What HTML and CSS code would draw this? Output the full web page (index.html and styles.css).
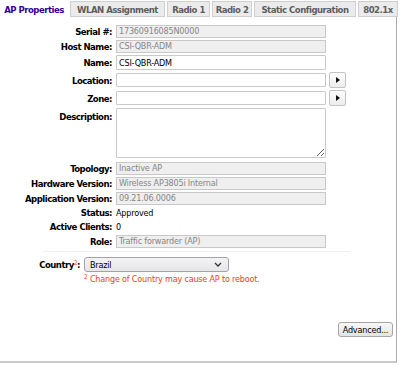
FILE: index.html
```html
<!DOCTYPE html>
<html>
<head>
<meta charset="utf-8">
<link rel="stylesheet" href="styles.css">
</head>
<body>
<div class="tabs">
  <div class="tab active t-ap">AP Properties</div>
  <div class="tab t-wlan">WLAN Assignment</div>
  <div class="tab t-r1">Radio 1</div>
  <div class="tab t-r2">Radio 2</div>
  <div class="tab t-static">Static Configuration</div>
  <div class="tab t-dot">802.1x</div>
</div>
<div class="panel">
  <div class="form">
    <label class="lbl">Serial #:</label>
    <div class="ro">17360916085N0000</div>
    <span></span>

    <label class="lbl">Host Name:</label>
    <div class="ro">CSI-QBR-ADM</div>
    <span></span>

    <label class="lbl">Name:</label>
    <input class="inp inp-name" type="text" value="CSI-QBR-ADM">
    <span></span>

    <label class="lbl">Location:</label>
    <input class="inp" type="text" value="">
    <button class="arrow" type="button"><svg width="4" height="6" viewBox="0 0 4 6"><path d="M0 0L4 3L0 6Z" fill="#111"/></svg></button>

    <label class="lbl">Zone:</label>
    <input class="inp" type="text" value="">
    <button class="arrow" type="button"><svg width="4" height="6" viewBox="0 0 4 6"><path d="M0 0L4 3L0 6Z" fill="#111"/></svg></button>

    <label class="lbl lbl-top">Description:</label>
    <textarea class="desc"></textarea>
    <span></span>

    <label class="lbl lbl-topo">Topology:</label>
    <div class="ro ro-topo">Inactive AP</div>
    <span></span>

    <label class="lbl">Hardware Version:</label>
    <div class="ro">Wireless AP3805i Internal</div>
    <span></span>

    <label class="lbl">Application Version:</label>
    <div class="ro">09.21.06.0006</div>
    <span></span>

    <label class="lbl line">Status:</label>
    <div class="val line">Approved</div>
    <span></span>

    <label class="lbl line">Active Clients:</label>
    <div class="val line">0</div>
    <span></span>

    <label class="lbl">Role:</label>
    <div class="ro">Traffic forwarder (AP)</div>
    <span></span>
  </div>

  <div class="sep"></div>

  <div class="country">
    <label class="lbl clbl">Country<sup class="sup">2</sup>:</label>
    <div class="select">
      <span>Brazil</span>
      <svg width="8" height="5" viewBox="0 0 8 5"><path d="M1 1L4 4L7 1" fill="none" stroke="#333" stroke-width="1.3"/></svg>
    </div>
  </div>
  <div class="note"><sup class="nsup">2</sup> Change of Country may cause AP to reboot.</div>

  <div class="actions">
    <button class="adv" type="button">Advanced...</button>
  </div>
</div>
</body>
</html>
```
FILE: styles.css
```css
* { box-sizing: border-box; }

body {
  margin: 0;
  background: #fff;
  font-family: "DejaVu Sans Condensed", "DejaVu Sans", sans-serif;
  font-stretch: condensed;
  font-size: 9px;
  letter-spacing: -0.2px;
  color: #000;
}

.tabs {
  display: flex;
  align-items: flex-end;
  height: 17px;
}

.tab {
  height: 16px;
  border: 1px solid #cfcfcf;
  background: #ebebeb;
  color: #5e5e5e;
  font-weight: bold;
  font-size: 9.5px;
  letter-spacing: -0.5px;
  display: flex;
  align-items: center;
  justify-content: center;
  margin-right: 2px;
  white-space: nowrap;
}

.tab.active {
  background: #fff;
  border-color: #fff;
  color: #330099;
}

.t-ap { width: 68px; }
.t-wlan { width: 95px; }
.t-r1 { width: 43px; }
.t-r2 { width: 40px; }
.t-static { width: 102px; }
.t-dot { width: 40px; margin-right: 0; }

.panel {
  width: 397px;
  height: 346px;
  border-right: 1px solid #a9a9a9;
  border-bottom: 2px solid #cacaca;
  display: flex;
  flex-direction: column;
}

.form {
  display: grid;
  grid-template-columns: 112px 210px 17px;
  column-gap: 4px;
  row-gap: 2px;
  align-items: center;
  padding-top: 8px;
}

.lbl {
  font-weight: bold;
  font-size: 9.5px;
  letter-spacing: -0.5px;
  text-align: right;
  white-space: nowrap;
}

.lbl-top { align-self: start; margin-top: 3px; }
.lbl-topo, .ro-topo { margin-top: 2px; }

.ro {
  height: 13px;
  border: 1px solid #c8c8c8;
  background: #efefef;
  color: #868686;
  padding: 0 2px;
  line-height: 11px;
  white-space: nowrap;
  overflow: hidden;
}

.inp {
  height: 14px;
  width: 210px;
  margin: 0;
  border: 1px solid #c9c9c9;
  border-radius: 1px;
  background: #fff;
  padding: 0 2px;
  font-family: inherit;
  font-stretch: condensed;
  font-size: 9px;
  letter-spacing: -0.2px;
  color: #000;
  outline: none;
}

.inp-name { height: 15px; }

.arrow {
  width: 17px;
  height: 16px;
  margin: 0 0 0 -1px;
  padding: 0;
  border: 1px solid #c4c4c4;
  border-radius: 2px;
  background: linear-gradient(#fdfdfd, #ececec);
  display: flex;
  align-items: center;
  justify-content: center;
}

.desc {
  width: 210px;
  height: 50px;
  margin: 0;
  border: 1px solid #c9c9c9;
  border-radius: 1px;
  resize: both;
  font-family: inherit;
  font-size: 9px;
  outline: none;
}

.line { line-height: 12px; height: 12px; }

.val { color: #000; }

.sep {
  margin: 3px 0 0 43px;
  width: 307px;
  height: 1px;
  background: #efefef;
}

.country {
  display: flex;
  align-items: center;
  gap: 4px;
  margin-top: 5px;
}

.clbl { width: 80px; }

.sup, .nsup {
  color: #f3401c;
  font-size: 6.5px;
  font-weight: normal;
  vertical-align: 3px;
  line-height: 0;
}

.select {
  width: 145px;
  height: 15px;
  border: 1px solid #a3a3a3;
  border-radius: 3px;
  background: linear-gradient(#f3f3f5, #e6e6ea);
  display: flex;
  align-items: center;
  justify-content: space-between;
  padding: 0 6px 0 5px;
}

.note {
  margin: 2px 0 0 84px;
  color: #f3401c;
  line-height: 10px;
}

.actions {
  display: flex;
  justify-content: flex-end;
  padding-right: 3px;
  margin-top: 38px;
}

.adv {
  width: 55px;
  height: 15px;
  margin: 0;
  padding: 0;
  border: 1px solid #a6a6a6;
  border-radius: 3px;
  background: linear-gradient(#f8f8f8, #e4e4e4);
  font-family: inherit;
  font-stretch: condensed;
  font-size: 9px;
  letter-spacing: -0.2px;
  color: #000;
}
```
